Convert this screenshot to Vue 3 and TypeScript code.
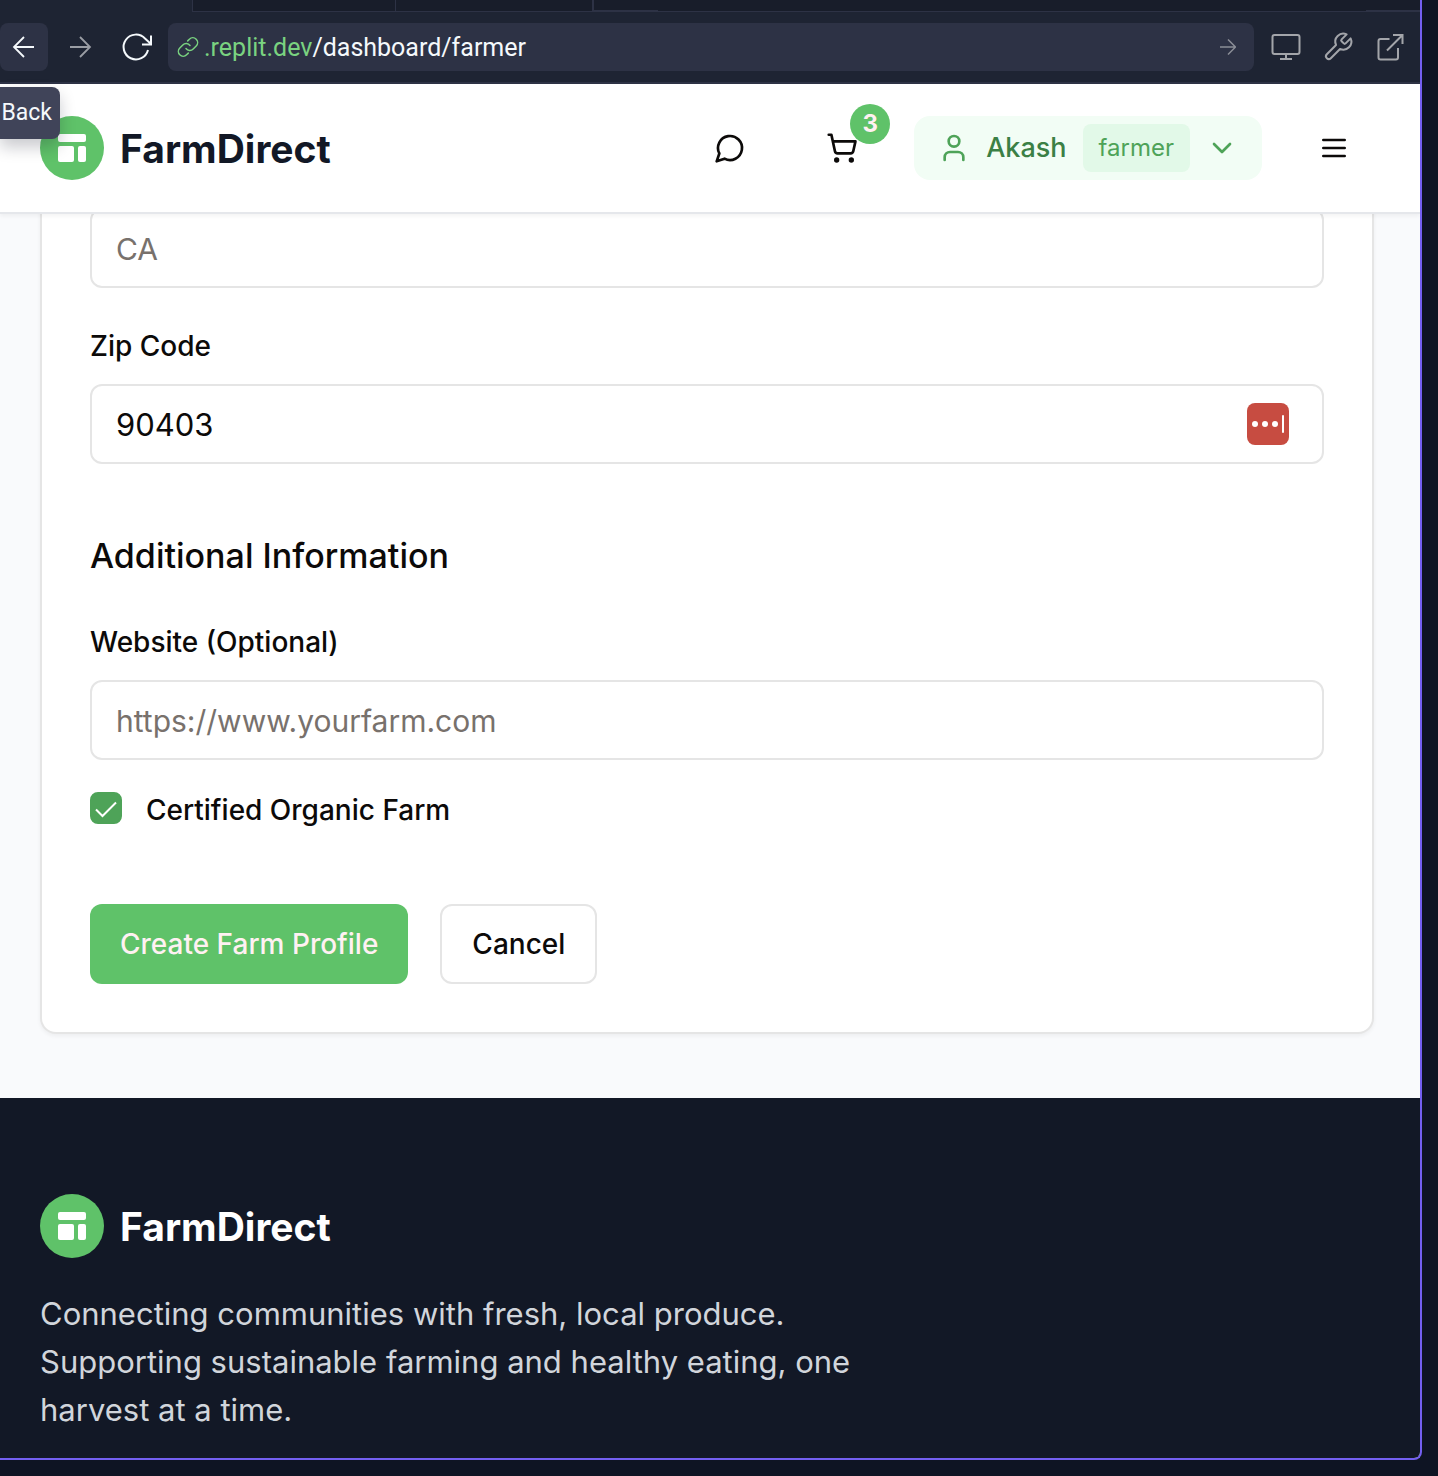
<script setup lang="ts">
import { ref } from 'vue'

const state = ref('')
const zipCode = ref('90403')
const website = ref('')
const isOrganic = ref(true)
const cartCount = ref(3)
const user = { name: 'Akash', role: 'farmer' }
</script>

<template>
  <div class="workspace">
    <div class="pane">
      <div class="tabs">
        <div class="tab active"></div>
        <div class="tab"></div>
        <div class="tab wide"></div>
        <div class="tab-rest"><span class="rail left"></span><span class="rail right"></span></div>
      </div>

      <div class="toolbar">
        <div class="history">
          <button class="tool hovered" type="button" aria-label="Back">
            <svg viewBox="0 0 32 32" fill="none" stroke="#f5f9fc" stroke-width="1.800"><path d="M26 16H7M16 6 6 16l10 10" /></svg>
          </button>
          <button class="tool" type="button" aria-label="Forward">
            <svg viewBox="0 0 32 32" fill="none" stroke="#9a9da4" stroke-width="1.800"><path d="M6 16h19M16 6l10 10-10 10" /></svg>
          </button>
          <button class="tool" type="button" aria-label="Reload">
            <svg viewBox="0 0 32 32" fill="none" stroke="#f5f9fc" stroke-width="2"><path d="M28 19A12.400 12.400 0 1 1 25 7.500L31 13M31 4.500v9H22" /></svg>
          </button>
        </div>
        <a class="address" href="#">
          <svg class="link-icon" viewBox="0 0 24 24" fill="none" stroke="#7ad380" stroke-width="1.500" stroke-linecap="round"><path d="M10 13.500a4.800 4.800 0 0 0 7.200.5l3-3a4.800 4.800 0 0 0-6.800-6.800l-1.700 1.700M14 10.500a4.800 4.800 0 0 0-7.200-.5l-3 3a4.800 4.800 0 0 0 6.800 6.800l1.700-1.700" /></svg>
          <span class="url"><span class="host">.replit.dev</span>/dashboard/farmer</span>
          <svg class="go-icon" viewBox="0 0 16 16" fill="none" stroke="#8b8e97" stroke-width="1.500"><path d="M0 8h15M8 .5 15.500 8 8 15.500" /></svg>
        </a>
        <div class="actions">
          <button class="tool" type="button" aria-label="Devices">
            <svg viewBox="0 0 32 32" fill="none" stroke="#a3a5aa" stroke-width="2"><rect x="2.500" y="4" width="27" height="19" rx="2" /><path d="M16 23v5M10 28h12" /></svg>
          </button>
          <button class="tool" type="button" aria-label="Developer tools">
            <svg viewBox="0 0 24 24" fill="none" stroke="#a3a5aa" stroke-width="1.500" stroke-linejoin="round"><path d="M14.700 6.300a1 1 0 0 0 0 1.400l1.600 1.600a1 1 0 0 0 1.400 0l3.770-3.770a6 6 0 0 1-7.940 7.940l-6.910 6.910a2.120 2.120 0 0 1-3-3l6.910-6.910a6 6 0 0 1 7.940-7.940l-3.760 3.760z" /></svg>
          </button>
          <button class="tool" type="button" aria-label="Open in new tab">
            <svg viewBox="0 0 32 32" fill="none" stroke="#a3a5aa" stroke-width="2"><path d="M15.500 8h-9a2 2 0 0 0-2 2v16.500a2 2 0 0 0 2 2H22a2 2 0 0 0 2-2V17M13 19.500 28 4.500M19 4h9.500v9" /></svg>
          </button>
        </div>
        <div class="tooltip" role="tooltip">Back</div>
      </div>

      <header class="site-header">
        <a class="brand" href="#">
          <span class="brand-mark">
            <svg viewBox="0 0 28 28" fill="#fff"><rect width="28" height="8" rx="2" /><rect y="12" width="16" height="16" rx="2" /><rect x="20" y="12" width="8" height="16" rx="2" /></svg>
          </span>
          <span class="brand-name">FarmDirect</span>
        </a>
        <nav class="nav">
          <button class="icon-button" type="button" aria-label="Messages">
            <svg class="icon" viewBox="0 0 24 24"><path d="M7.900 20A9 9 0 1 0 4 16.100L2 22Z" /></svg>
          </button>
          <button class="icon-button" type="button" aria-label="Cart">
            <svg class="icon" viewBox="0 0 24 24"><circle cx="8" cy="21" r="1" /><circle cx="19" cy="21" r="1" /><path d="M2.050 2.050h2l2.660 12.420a2 2 0 0 0 2 1.580h9.780a2 2 0 0 0 1.950-1.570l1.650-7.430H5.120" /></svg>
            <span class="count">{{ cartCount }}</span>
          </button>
          <button class="account" type="button">
            <svg class="icon green" viewBox="0 0 24 24"><path d="M19 21v-2a4 4 0 0 0-4-4H9a4 4 0 0 0-4 4v2" /><circle cx="12" cy="7" r="4" /></svg>
            <span class="account-name">{{ user.name }}</span>
            <span class="role">{{ user.role }}</span>
            <svg class="icon green" viewBox="0 0 24 24"><path d="m6 9 6 6 6-6" /></svg>
          </button>
          <button class="icon-button" type="button" aria-label="Menu">
            <svg class="icon" viewBox="0 0 24 24"><path d="M4 6h16M4 12h16M4 18h16" /></svg>
          </button>
        </nav>
      </header>

      <main class="content">
        <form class="card" @submit.prevent>
          <input v-model="state" class="text-input" type="text" placeholder="CA" aria-label="State" />

          <label class="field-label" for="zip">Zip Code</label>
          <div class="input-wrap">
            <input id="zip" v-model="zipCode" class="text-input" type="text" />
            <button class="autofill" type="button" aria-label="Fill with password manager">
              <svg viewBox="0 0 42 42" fill="#fff"><circle cx="8" cy="21" r="3" /><circle cx="18" cy="21" r="3" /><circle cx="28" cy="21" r="3" /><rect x="35" y="12" width="2" height="18" rx="1" /></svg>
            </button>
          </div>

          <h3 class="section-title">Additional Information</h3>
          <label class="field-label" for="website">Website (Optional)</label>
          <input id="website" v-model="website" class="text-input" type="url" placeholder="https://www.yourfarm.com" />

          <div class="check-row">
            <input id="organic" v-model="isOrganic" class="check" type="checkbox" />
            <svg v-if="isOrganic" class="tick" viewBox="0 0 32 32" fill="none" stroke="#fff" stroke-width="2"><path d="m6 17.500 6.500 6.500L26 10.500" /></svg>
            <label class="check-label" for="organic">Certified Organic Farm</label>
          </div>

          <div class="buttons">
            <button class="button primary" type="submit">Create Farm Profile</button>
            <button class="button outline" type="button">Cancel</button>
          </div>
        </form>
      </main>

      <footer class="site-footer">
        <a class="brand" href="#">
          <span class="brand-mark">
            <svg viewBox="0 0 28 28" fill="#fff"><rect width="28" height="8" rx="2" /><rect y="12" width="16" height="16" rx="2" /><rect x="20" y="12" width="8" height="16" rx="2" /></svg>
          </span>
          <span class="brand-name">FarmDirect</span>
        </a>
        <p class="blurb">Connecting communities with fresh, local produce. Supporting sustainable farming and healthy eating, one harvest at a time.</p>
      </footer>
    </div>
  </div>
</template>

<style>
body {
  margin: 0;
  background: #0e1423;
}
</style>

<style scoped>
* {
  box-sizing: border-box;
}
.workspace {
  padding: 0 16px 16px 0;
  background: #0e1423;
  color: #0c0a09;
  font-family: Inter, "Liberation Sans", sans-serif;
}
button {
  margin: 0;
  padding: 0;
  border: 0;
  background: none;
  color: inherit;
  font-family: inherit;
}
a {
  color: inherit;
  text-decoration: none;
}
svg {
  display: block;
  flex: none;
}
.pane {
  position: relative;
  overflow: hidden;
  border: solid #735ff0;
  border-width: 0 2px 2px 0;
  border-radius: 0 0 8px 0;
  background: #f9fafc;
}

/* Browser chrome */
.tabs {
  display: flex;
  height: 12px;
  background: #1e2433;
}
.tab {
  width: 203px;
  background: #181d2a;
  border-bottom: 1px solid #2d3245;
  border-left: 1px solid #2d3245;
}
.tab.active {
  width: 192px;
  border: 0;
  background: #1e2433;
}
.tab.wide {
  width: 197px;
}
.tab-rest {
  display: flex;
  flex: 1;
  align-items: flex-end;
  justify-content: space-between;
  border-left: 2px solid #2d3245;
  border-bottom: 1px solid #2d3245;
  background: #181d2a;
}
.rail {
  height: 1px;
  background: #2d3245;
}
.rail.left {
  width: 64px;
}
.rail.right {
  width: 54px;
}
.toolbar {
  position: relative;
  z-index: 3;
  display: flex;
  align-items: center;
  gap: 8px;
  height: 72px;
  padding-right: 6px;
  border-bottom: 2px solid #2d3245;
  background: #1e2433;
}
.history {
  display: flex;
  gap: 8px;
}
.actions {
  display: flex;
  gap: 4px;
}
.tool {
  display: flex;
  align-items: center;
  justify-content: center;
  width: 48px;
  height: 48px;
  border-radius: 8px;
}
.tool svg {
  width: 32px;
  height: 32px;
  overflow: visible;
}
.tool.hovered {
  background: #2d3245;
}
.address {
  display: flex;
  flex: 1;
  align-items: center;
  height: 48px;
  padding: 0 18px 0 8px;
  border-radius: 8px;
  background: #2d3245;
}
.link-icon {
  width: 24px;
  height: 24px;
}
.go-icon {
  width: 16px;
  height: 16px;
}
.url {
  flex: 1;
  padding: 2px 0 0 4px;
  color: #f5f9fc;
  font-family: Roboto, "Liberation Sans", sans-serif;
  font-size: 25px;
  line-height: 32px;
}
.host {
  color: #7ad380;
}
.tooltip {
  position: absolute;
  top: 75px;
  left: 0;
  display: flex;
  justify-content: flex-end;
  width: 60px;
  height: 52px;
  padding-right: 8px;
  border-radius: 0 8px 8px 0;
  background: #404459;
  box-shadow: 0 8px 16px rgba(10, 14, 30, 0.22);
  color: #f5f9fc;
  font-family: Roboto, "Liberation Sans", sans-serif;
  font-size: 23px;
  line-height: 52px;
}

/* Site header */
.site-header {
  position: relative;
  z-index: 2;
  display: flex;
  align-items: center;
  justify-content: space-between;
  height: 130px;
  padding: 0 46px 0 40px;
  border-bottom: 2px solid #e5e7eb;
  background: #fff;
  box-shadow: 0 2px 4px rgba(0, 0, 0, 0.05);
}
.brand {
  display: flex;
  align-items: center;
  gap: 16px;
  color: #121826;
}
.brand-mark {
  display: flex;
  align-items: center;
  justify-content: center;
  width: 64px;
  height: 64px;
  border-radius: 50%;
  background: #5fc269;
}
.brand-mark svg {
  width: 28px;
  height: 28px;
}
.brand-name {
  padding-top: 2px;
  font-size: 39px;
  font-weight: 700;
  line-height: 56px;
}
.nav {
  display: flex;
  align-items: center;
  gap: 32px;
}
.icon-button {
  position: relative;
  display: flex;
  align-items: center;
  justify-content: center;
  width: 80px;
  height: 80px;
}
.icon {
  width: 32px;
  height: 32px;
  fill: none;
  stroke: #0c0a09;
  stroke-width: 2;
  stroke-linecap: round;
  stroke-linejoin: round;
}
.icon.green {
  stroke: #4ea358;
}
.count {
  position: absolute;
  top: -4px;
  right: -8px;
  width: 40px;
  height: 40px;
  border-radius: 50%;
  background: #5fc269;
  color: #fff1f2;
  font-size: 24px;
  font-weight: 700;
  line-height: 40px;
  text-align: center;
}
.account {
  display: flex;
  align-items: center;
  gap: 16px;
  height: 64px;
  padding: 0 24px;
  border-radius: 16px;
  background: #f2fdf5;
}
.account-name {
  color: #3b8045;
  font-size: 27px;
  font-weight: 500;
  line-height: 40px;
}
.role {
  padding: 8px 16px;
  border-radius: 8px;
  background: #e2f9e8;
  color: #4ea358;
  font-size: 24px;
  line-height: 32px;
}

.content {
  margin-top: -16px;
  padding: 0 46px 64px 40px;
}
.card {
  padding: 10px 48px 48px;
  border: solid #e5e5e5;
  border-width: 0 2px 2px;
  border-radius: 0 0 16px 16px;
  background: #fff;
  box-shadow: 0 2px 4px rgba(0, 0, 0, 0.05);
}
.text-input {
  display: block;
  width: 100%;
  height: 80px;
  margin: 0;
  padding: 0 24px;
  border: 2px solid #e5e5e5;
  border-radius: 12px;
  outline: 0;
  background: #fff;
  color: #0c0a09;
  font-family: inherit;
  font-size: 31px;
}
.text-input::placeholder {
  color: #78716c;
  font-size: 30px;
  opacity: 1;
}
.field-label {
  display: block;
  margin: 44px 0 24px;
  font-size: 28px;
  font-weight: 500;
  line-height: 28px;
}
.input-wrap {
  position: relative;
}
.autofill {
  position: absolute;
  top: 19px;
  right: 35px;
  width: 42px;
  height: 42px;
  border-radius: 8px;
  background: #c74c41;
}
.section-title {
  margin: 64px 0 0;
  font-size: 34px;
  font-weight: 500;
  line-height: 56px;
}
.check-row {
  position: relative;
  display: flex;
  align-items: center;
  gap: 24px;
  height: 32px;
  margin-top: 32px;
}
.check {
  width: 32px;
  height: 32px;
  margin: 0;
  border: 2px solid #4ea358;
  border-radius: 8px;
  appearance: none;
}
.check:checked {
  background: #4ea358;
}
.tick {
  position: absolute;
  top: 0;
  left: 0;
  width: 32px;
  height: 32px;
  pointer-events: none;
}
.check-label {
  padding-top: 4px;
  font-size: 28px;
  font-weight: 500;
  line-height: 32px;
}
.buttons {
  display: flex;
  gap: 32px;
  margin-top: 80px;
}
.button {
  height: 80px;
  padding: 0 30px;
  border-radius: 12px;
  font-size: 28px;
  font-weight: 500;
}
.button.primary {
  background: #5fc269;
  color: #fff1f2;
}
.button.outline {
  border: 2px solid #e5e5e5;
  background: #fff;
}

/* Footer */
.site-footer {
  padding: 96px 40px 24px;
  background: #121826;
}
.site-footer .brand {
  color: #fff;
}
.blurb {
  max-width: 860px;
  margin: 32px 0 0;
  color: #d1d5db;
  font-size: 31px;
  line-height: 48px;
}
</style>
